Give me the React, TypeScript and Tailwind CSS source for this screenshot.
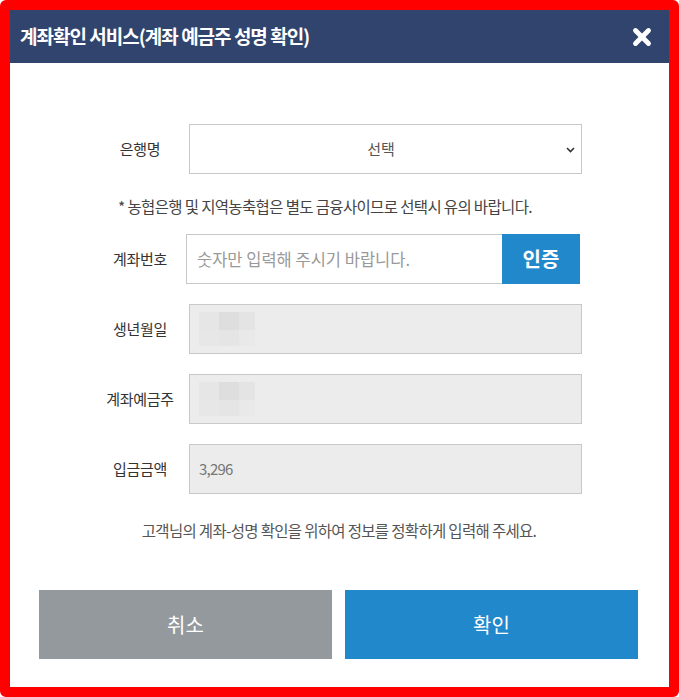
import { X } from 'lucide-react'

const font = { fontFamily: '"Noto Sans CJK KR", "Noto Sans", sans-serif' }

function Blur() {
  return (
    <div className="grid grid-cols-[20px_20px_16px] grid-rows-[18px_16px] opacity-70">
      <div className="bg-[#e4e4e4]" />
      <div className="bg-[#d9d9d9]" />
      <div className="bg-[#e2e2e2]" />
      <div className="bg-[#e6e6e6]" />
      <div className="bg-[#e3e3e3]" />
      <div className="bg-[#e8e8e8]" />
    </div>
  )
}

function Row({ label, children }: { label: string; children: React.ReactNode }) {
  return (
    <div className="flex items-center">
      <div className="w-[80px] mr-[9px] text-center text-[15px] text-[#333] tracking-[-0.3px]">{label}</div>
      <div className="flex-1">{children}</div>
    </div>
  )
}

function ReadOnly({ children }: { children?: React.ReactNode }) {
  return (
    <div className="h-[50px] border border-[#c8c8c8] bg-[#ececec] flex items-center px-[9px] text-[15px] text-[#777] tracking-[-0.8px]">
      {children}
    </div>
  )
}

export default function App() {
  return (
    <div className="w-[679px] h-[697px] bg-white" style={font}>
      <div className="h-full border-[10px] border-[#ff0000] rounded-[6px] flex flex-col bg-white">
        <div className="h-[53px] bg-[#30446e] flex items-center justify-between pl-[10px] pr-[14px]">
          <h1 className="text-white text-[19px] font-bold tracking-[-1px]">계좌확인 서비스(계좌 예금주 성명 확인)</h1>
          <X className="text-white w-[26px] h-[26px]" strokeWidth={4.5} />
        </div>

        <div className="flex-1 flex flex-col pl-[90px] pr-[87px] pt-[61px]">
          <Row label="은행명">
            <div className="h-[50px] border border-[#c8c8c8] flex items-center justify-center pr-[9px] relative text-[15px] text-[#555]">
              선택
              <svg className="absolute right-[6px] top-[22px]" width="9" height="6" viewBox="0 0 9 6">
                <path d="M1 1l3.5 3.5L8 1" stroke="#333" strokeWidth="1.6" fill="none" />
              </svg>
            </div>
          </Row>

          <p className="h-[60px] flex items-center justify-center text-[15.5px] text-[#444] tracking-[-0.65px] pr-[32px] pt-[6px]">
            * 농협은행 및 지역농축협은 별도 금융사이므로 선택시 유의 바랍니다.
          </p>

          <div className="flex flex-col gap-[20px]">
            <Row label="계좌번호">
              <div className="flex h-[50px] -ml-[3px] mr-[2px]">
                <div className="flex-1 border border-[#c8c8c8] border-r-0 flex items-center px-[10px] text-[16.5px] text-[#999]">
                  숫자만 입력해 주시기 바랍니다.
                </div>
                <button className="w-[78px] bg-[#2288cc] text-white text-[20px] font-bold">인증</button>
              </div>
            </Row>
            <Row label="생년월일">
              <ReadOnly>
                <Blur />
              </ReadOnly>
            </Row>
            <Row label="계좌예금주">
              <ReadOnly>
                <Blur />
              </ReadOnly>
            </Row>
            <Row label="입금금액">
              <ReadOnly>3,296</ReadOnly>
            </Row>
          </div>

          <p className="h-[74px] flex items-center justify-center text-[15.5px] text-[#555] tracking-[-0.68px] pr-[4px]">
            고객님의 계좌-성명 확인을 위하여 정보를 정확하게 입력해 주세요.
          </p>
        </div>

        <div className="grid grid-cols-2 gap-[13px] pl-[29px] pr-[31px] pb-[28px]">
          <button className="h-[69px] bg-[#94999e] text-white text-[20px]">취소</button>
          <button className="h-[69px] bg-[#2288cc] text-white text-[20px]">확인</button>
        </div>
      </div>
    </div>
  )
}
